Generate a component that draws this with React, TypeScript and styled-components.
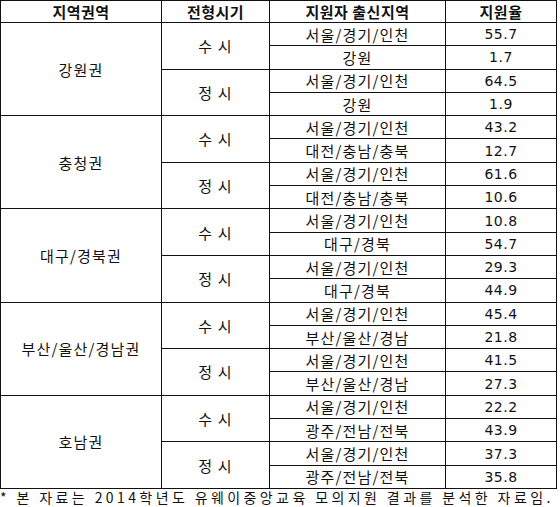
import React from "react";
import styled, { createGlobalStyle } from "styled-components";

const Global = createGlobalStyle`
  html, body { margin: 0; padding: 0; background: #fff; }
  body { font-family: "Noto Sans CJK KR", "Noto Sans", sans-serif; color: #000; }
`;

const Page = styled.div`
  width: 560px;
  display: flex;
  flex-direction: column;
`;

const Table = styled.div`
  width: 557px;
  height: 489px;
  box-sizing: border-box;
  display: grid;
  grid-template-columns: 160px 107px 175px 110px;
  grid-template-rows: 21px repeat(20, 1fr);
  gap: 1px;
  padding: 1px;
  background: #111;
`;

const Cell = styled.div<{ $col: number; $span?: number; $bold?: boolean }>`
  grid-column: ${(p) => p.$col};
  grid-row: span ${(p) => p.$span ?? 1};
  background: #fff;
  display: flex;
  align-items: center;
  justify-content: center;
  font-size: 15px;
  font-weight: ${(p) => (p.$bold ? 700 : 400)};
  letter-spacing: ${(p) => (p.$bold ? "0.5px" : "1.2px")};
  line-height: 1;
  color: #111;
  white-space: nowrap;
`;

const Num = styled.span`
  font-family: "DejaVu Sans", "Noto Sans", sans-serif;
  font-size: 14px;
  letter-spacing: 0.5px;
`;

const Note = styled.div`
  font-size: 14px;
  letter-spacing: 3.4px;
  line-height: 16px;
  white-space: nowrap;
  color: #111;
`;

type Sub = { origin: string; rate: string };
type Region = { name: string; susi: Sub[]; jeongsi: Sub[] };

const data: Region[] = [
  {
    name: "강원권",
    susi: [
      { origin: "서울/경기/인천", rate: "55.7" },
      { origin: "강원", rate: "1.7" },
    ],
    jeongsi: [
      { origin: "서울/경기/인천", rate: "64.5" },
      { origin: "강원", rate: "1.9" },
    ],
  },
  {
    name: "충청권",
    susi: [
      { origin: "서울/경기/인천", rate: "43.2" },
      { origin: "대전/충남/충북", rate: "12.7" },
    ],
    jeongsi: [
      { origin: "서울/경기/인천", rate: "61.6" },
      { origin: "대전/충남/충북", rate: "10.6" },
    ],
  },
  {
    name: "대구/경북권",
    susi: [
      { origin: "서울/경기/인천", rate: "10.8" },
      { origin: "대구/경북", rate: "54.7" },
    ],
    jeongsi: [
      { origin: "서울/경기/인천", rate: "29.3" },
      { origin: "대구/경북", rate: "44.9" },
    ],
  },
  {
    name: "부산/울산/경남권",
    susi: [
      { origin: "서울/경기/인천", rate: "45.4" },
      { origin: "부산/울산/경남", rate: "21.8" },
    ],
    jeongsi: [
      { origin: "서울/경기/인천", rate: "41.5" },
      { origin: "부산/울산/경남", rate: "27.3" },
    ],
  },
  {
    name: "호남권",
    susi: [
      { origin: "서울/경기/인천", rate: "22.2" },
      { origin: "광주/전남/전북", rate: "43.9" },
    ],
    jeongsi: [
      { origin: "서울/경기/인천", rate: "37.3" },
      { origin: "광주/전남/전북", rate: "35.8" },
    ],
  },
];

export default function App() {
  return (
    <Page>
      <Global />
      <Table>
        <Cell $col={1} $bold>지역권역</Cell>
        <Cell $col={2} $bold>전형시기</Cell>
        <Cell $col={3} $bold>지원자 출신지역</Cell>
        <Cell $col={4} $bold>지원율</Cell>
        {data.map((r) => (
          <React.Fragment key={r.name}>
            <Cell $col={1} $span={4}>{r.name}</Cell>
            {([["수시", r.susi], ["정시", r.jeongsi]] as [string, Sub[]][]).map(([t, subs]) => (
              <React.Fragment key={t}>
                <Cell $col={2} $span={2}>{t.split("").join(" ")}</Cell>
                {subs.map((s, i) => (
                  <React.Fragment key={i}>
                    <Cell $col={3}>{s.origin}</Cell>
                    <Cell $col={4}><Num>{s.rate}</Num></Cell>
                  </React.Fragment>
                ))}
              </React.Fragment>
            ))}
          </React.Fragment>
        ))}
      </Table>
      <Note>* 본 자료는 2014학년도 유웨이중앙교육 모의지원 결과를 분석한 자료임.</Note>
    </Page>
  );
}
